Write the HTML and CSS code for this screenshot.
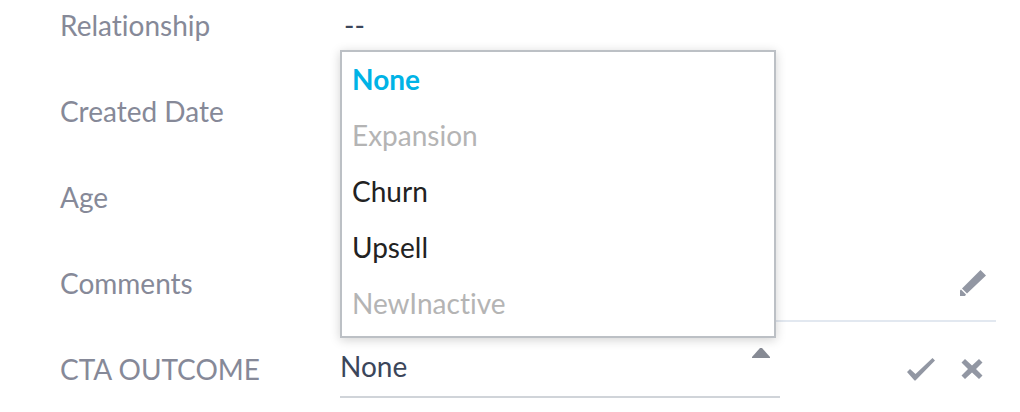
FILE: index.html
```html
<!DOCTYPE html>
<html lang="en">
<head>
  <meta charset="utf-8">
  <title>CTA Details</title>
  <link rel="stylesheet" href="styles.css">
</head>
<body>
  <form class="details">
    <div class="row">
      <span class="label">Relationship</span>
      <div class="value">--</div>
    </div>
    <div class="row">
      <span class="label">Created Date</span>
      <div class="value"></div>
    </div>
    <div class="row">
      <span class="label">Age</span>
      <div class="value"></div>
    </div>
    <div class="row">
      <span class="label">Comments</span>
      <div class="value editable">
        <button type="button" class="icon-btn" aria-label="Edit comments">
          <svg width="28" height="28" viewBox="0 0 28 28"><path d="M22.500 0L28 5.500L9 23.500L4 18.500ZM3 19.500L8 24.500L7 26H2V20.500Z"/></svg>
        </button>
      </div>
    </div>
    <div class="row">
      <label class="label" for="outcome">CTA OUTCOME</label>
      <div class="value editing">
        <div class="picker">
          <select id="outcome">
            <option selected>None</option>
            <option disabled>Expansion</option>
            <option>Churn</option>
            <option>Upsell</option>
            <option disabled>NewInactive</option>
          </select>
          <svg class="arrow" width="18" height="10" viewBox="0 0 18 10"><path d="M0 10V9L8 0H10L18 9V10Z"/></svg>
          <div class="menu" role="listbox" aria-label="CTA OUTCOME">
            <button type="button" role="option" aria-selected="true" class="item selected">None</button>
            <button type="button" role="option" class="item" disabled>Expansion</button>
            <button type="button" role="option" class="item">Churn</button>
            <button type="button" role="option" class="item">Upsell</button>
            <button type="button" role="option" class="item" disabled>NewInactive</button>
          </div>
        </div>
        <div class="actions">
          <button type="button" class="icon-btn" id="save" aria-label="Save">
            <svg width="28" height="24" viewBox="0 0 28 24"><path d="M0 15L3 12L8.500 17L25.500 1L28 3.500L8.500 23.500H7.500Z"/></svg>
          </button>
          <button type="button" class="icon-btn" id="cancel" aria-label="Cancel">
            <svg width="22" height="22" viewBox="0 0 22 22"><path d="M4 1L11 7.500L18 1L21.500 4.500L15 11L21.500 17.500L18 21L11 14.500L4 21L0.500 17.500L7 11L0.500 4.500Z"/></svg>
          </button>
        </div>
      </div>
    </div>
  </form>
  <script>
  var select=document.getElementById('outcome'),
      items=document.getElementsByClassName('item');

  // pick an option from the menu
  function pick(index){
    for(var i=0;i<items.length;i++){
      items[i].classList.toggle('selected',i===index);
      items[i].setAttribute('aria-selected',i===index);
    }
    select.selectedIndex=index;
  }

  for(let i=0;i<items.length;i++){
    items[i].onclick=function(){
      pick(i);
    };
  }
  select.onchange=function(){
    pick(select.selectedIndex);
  };
  document.getElementById('cancel').onclick=function(){
    pick(0);
  };
  </script>
</body>
</html>
```
FILE: styles.css
```css
*{
  box-sizing: border-box;
}
body{
  margin: 0;
  background: #fff;
  color: #3b465a;
  font: 28px/34px Lato, "Liberation Sans", sans-serif;
  font-variant-ligatures: none;
}
button, select{
  font: inherit;
  font-variant-ligatures: none;
  border: 0;
  border-radius: 0;
  padding: 0;
  background: none;
  cursor: pointer;
}
svg{
  display: block;
  fill: #9297a3;
}

.details{
  padding: 0 24px 4px 60px;
}
.row{
  display: grid;
  grid-template-columns: 280px 1fr;
}
.label{
  padding: 30px 0 22px;
  color: #868998;
}
.value{
  padding: 30px 4px 0;
}
/* the list starts right under the panel edge */
.row:first-child .label,
.row:first-child .value{
  padding-top: 8px;
}
.editable{
  display: flex;
  justify-content: flex-end;
  align-items: flex-start;
  padding-top: 34px;
  padding-right: 10px;
  border-bottom: 2px solid #e2e8f0;
}

.editing{
  display: flex;
  justify-content: space-between;
  align-items: flex-start;
  padding: 14px 12px 0 0;
}
.picker{
  position: relative;
  flex: 0 1 440px;
}
.picker select{
  display: block;
  width: 100%;
  height: 62px;
  appearance: none;
  border-bottom: 2px solid #d0d4d9;
  color: #3b465a;
  outline: none;
}
.arrow{
  position: absolute;
  right: 10px;
  top: 12px;
  fill: #868a94;
  pointer-events: none;
}
.menu{
  position: absolute;
  left: 0;
  right: 4px;
  bottom: 60px;
  padding-bottom: 4px;
  background: #fff;
  border: 2px solid #bcc0c5;
  box-shadow: 0 2px 10px rgba(0, 0, 0, 0.18);
}
.item{
  display: block;
  width: 100%;
  height: 56px;
  padding: 0 10px 2px;
  color: #222;
  text-align: left;
}
.item:disabled{
  color: #b4b4b4;
  cursor: default;
}
.selected{
  color: #00b3e6;
  font-weight: bold;
}

.actions{
  display: flex;
  align-items: center;
  gap: 26px;
  height: 62px;
  padding: 4px 1px 0 0;
}
```
